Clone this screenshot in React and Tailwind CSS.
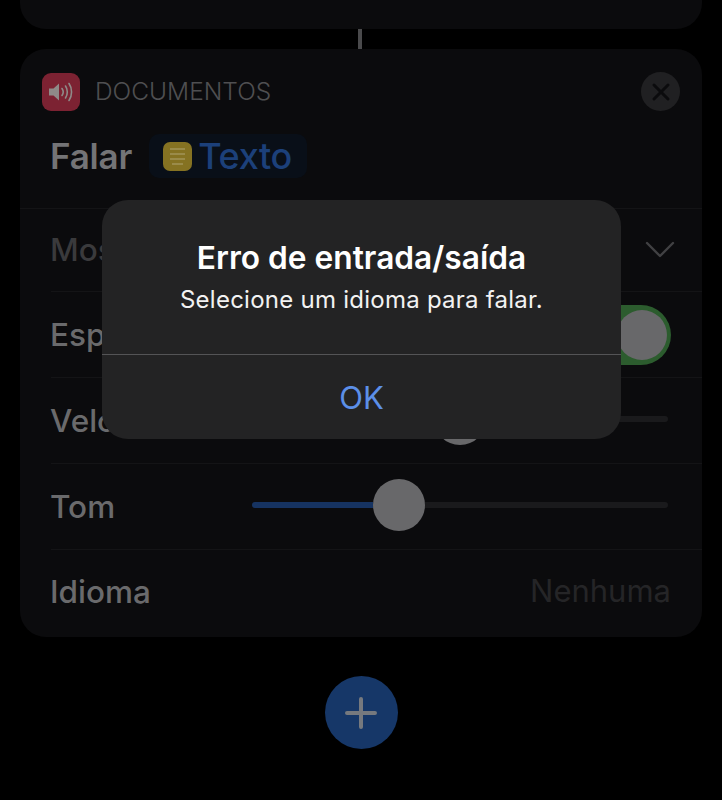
const fontStack = { fontFamily: "Inter, 'Noto Sans', sans-serif" }

const Divider = () => <div className="h-px ml-[31px] bg-[#141416]" />

const Slider = ({ filled, rest }) => (
    <div className="flex items-center w-[416px] mr-[2px] mb-[4px]">
        <div className={`${filled} h-[6px] rounded-l-full bg-[#163361]`} />
        <div className="w-[52px] h-[52px] rounded-full bg-[#68686a] shrink-0" />
        <div className={`${rest} h-[6px] rounded-r-full bg-[#1a1a1c]`} />
    </div>
)

const Row = ({ label, height, children }) => (
    <div className={`${height} flex items-center justify-between pl-[30px] pr-[32px]`}>
        <span className="text-[31.5px] font-medium text-[#6a6a6c]">{label}</span>
        {children}
    </div>
)

const App = () => {
    return (
        <div className="relative w-[722px] h-[800px] overflow-hidden bg-black" style={fontStack}>
            {/* Cartão anterior, cortado no topo */}
            <div className="mx-[20px] h-[29px] rounded-b-[26px] bg-[#0b0b0d]" />
            <div className="ml-[358px] w-[4px] h-[20px] bg-[#4a4a4c]" />

            {/* Cartão da ação */}
            <div className="mx-[20px] h-[588px] rounded-[26px] bg-[#0b0b0d]">
                <div className="h-[159px] pt-[23px]">
                    <div className="flex items-center justify-between pl-[22px] pr-[22px]">
                        <div className="flex items-center gap-[15px]">
                            <div className="w-[38px] h-[38px] rounded-[9px] bg-[#7c2232] flex items-center justify-center">
                                <svg width="28" height="24" viewBox="0 0 28 24" fill="none">
                                    <path d="M2 8.5h4.5L12 3.5v17l-5.5-5H2z" fill="#8f8a88" />
                                    <path d="M15 8.5c1.4 2 1.4 5 0 7" stroke="#8f8a88" strokeWidth="1.6" strokeLinecap="round" />
                                    <path d="M18.5 6c2.4 3.4 2.4 8.6 0 12" stroke="#8f8a88" strokeWidth="1.6" strokeLinecap="round" />
                                    <path d="M22 3.5c3.4 4.8 3.4 12.2 0 17" stroke="#8f8a88" strokeWidth="1.6" strokeLinecap="round" />
                                </svg>
                            </div>
                            <span className="text-[24.5px] font-light text-[#4f4f51]">DOCUMENTOS</span>
                        </div>
                        <div className="w-[39px] h-[39px] rounded-full bg-[#202022] flex items-center justify-center">
                            <svg width="20" height="20" viewBox="0 0 20 20" fill="none">
                                <path d="M3 3l14 14M17 3L3 17" stroke="#0b0b0d" strokeWidth="3" strokeLinecap="round" />
                            </svg>
                        </div>
                    </div>
                    <div className="flex items-center mt-[19px] pl-[30px]">
                        <span className="text-[35px] font-semibold tracking-[-0.2px] text-[#747476]">Falar</span>
                        <div className="flex items-center gap-[6px] ml-[17px] h-[44px] pl-[14px] pr-[15px] rounded-[10px] bg-[#090f18]">
                            <div className="w-[29px] h-[29px] rounded-[7px] bg-[#857222] flex flex-col items-center justify-center gap-[3px]">
                                <div className="w-[15px] h-[2px] bg-[#9a8b4a]" />
                                <div className="w-[15px] h-[2px] bg-[#9a8b4a]" />
                                <div className="w-[15px] h-[2px] bg-[#9a8b4a]" />
                                <div className="w-[11px] h-[2px] bg-[#9a8b4a]" />
                            </div>
                            <span className="text-[36px] font-medium tracking-[-0.3px] text-[#1c407a]">Texto</span>
                        </div>
                    </div>
                </div>
                <div className="h-px bg-[#141416]" />
                <div className="h-[82px] flex items-center justify-between pl-[30px] pr-[27px]">
                    <span className="text-[31.5px] font-medium text-[#3a3a3c]">Mostrar Mais</span>
                    <svg width="30" height="18" viewBox="0 0 30 18" fill="none">
                        <path d="M2 2l13 13L28 2" stroke="#414143" strokeWidth="2.4" strokeLinecap="round" strokeLinejoin="round" />
                    </svg>
                </div>
                <Divider />
                <div className="h-[85px] flex items-center justify-between pl-[30px] pr-[31px]">
                    <span className="text-[31.5px] font-medium text-[#6a6a6c]">Esperar Até Terminar</span>
                    <div className="w-[92px] h-[60px] rounded-full bg-[#2c5c2e] flex items-center justify-end pr-[4px]">
                        <div className="w-[50px] h-[50px] rounded-full bg-[#68686a]" />
                    </div>
                </div>
                <Divider />
                <Row label="Velocidade" height="h-[85px]">
                    <Slider filled="w-[182px]" rest="flex-1" />
                </Row>
                <Divider />
                <Row label="Tom" height="h-[85px]">
                    <Slider filled="w-[121px]" rest="flex-1" />
                </Row>
                <Divider />
                <Row label="Idioma" height="h-[87px] pb-[4px]">
                    <span className="text-[31px] font-normal text-[#252527] mr-[-1px]">Nenhuma</span>
                </Row>
            </div>

            {/* Botão de adicionar */}
            <div className="flex justify-center mt-[39px]">
                <div className="w-[73px] h-[73px] rounded-full bg-[#163768] flex items-center justify-center">
                    <svg width="32" height="32" viewBox="0 0 32 32" fill="none">
                        <path d="M16 2v28M2 16h28" stroke="#76797e" strokeWidth="4" strokeLinecap="round" />
                    </svg>
                </div>
            </div>

            {/* Alerta */}
            <div className="absolute left-[102px] top-[200px] w-[519px] h-[239px] rounded-[26px] bg-[#232324] flex flex-col">
                <div className="h-[154px] flex flex-col items-center pt-[37px]">
                    <h1 className="text-[31.7px] leading-[42px] font-semibold text-white">Erro de entrada/saída</h1>
                    <p className="text-[24px] leading-[30px] mt-[6px] tracking-[0.25px] text-[#f2f2f2]">Selecione um idioma para falar.</p>
                </div>
                <div className="h-px bg-[#545456]" />
                <div className="flex-1 flex items-center justify-center pt-[2px]">
                    <span className="text-[31px] text-[#5c8fe8]">OK</span>
                </div>
            </div>
        </div>
    )
}

export default App
